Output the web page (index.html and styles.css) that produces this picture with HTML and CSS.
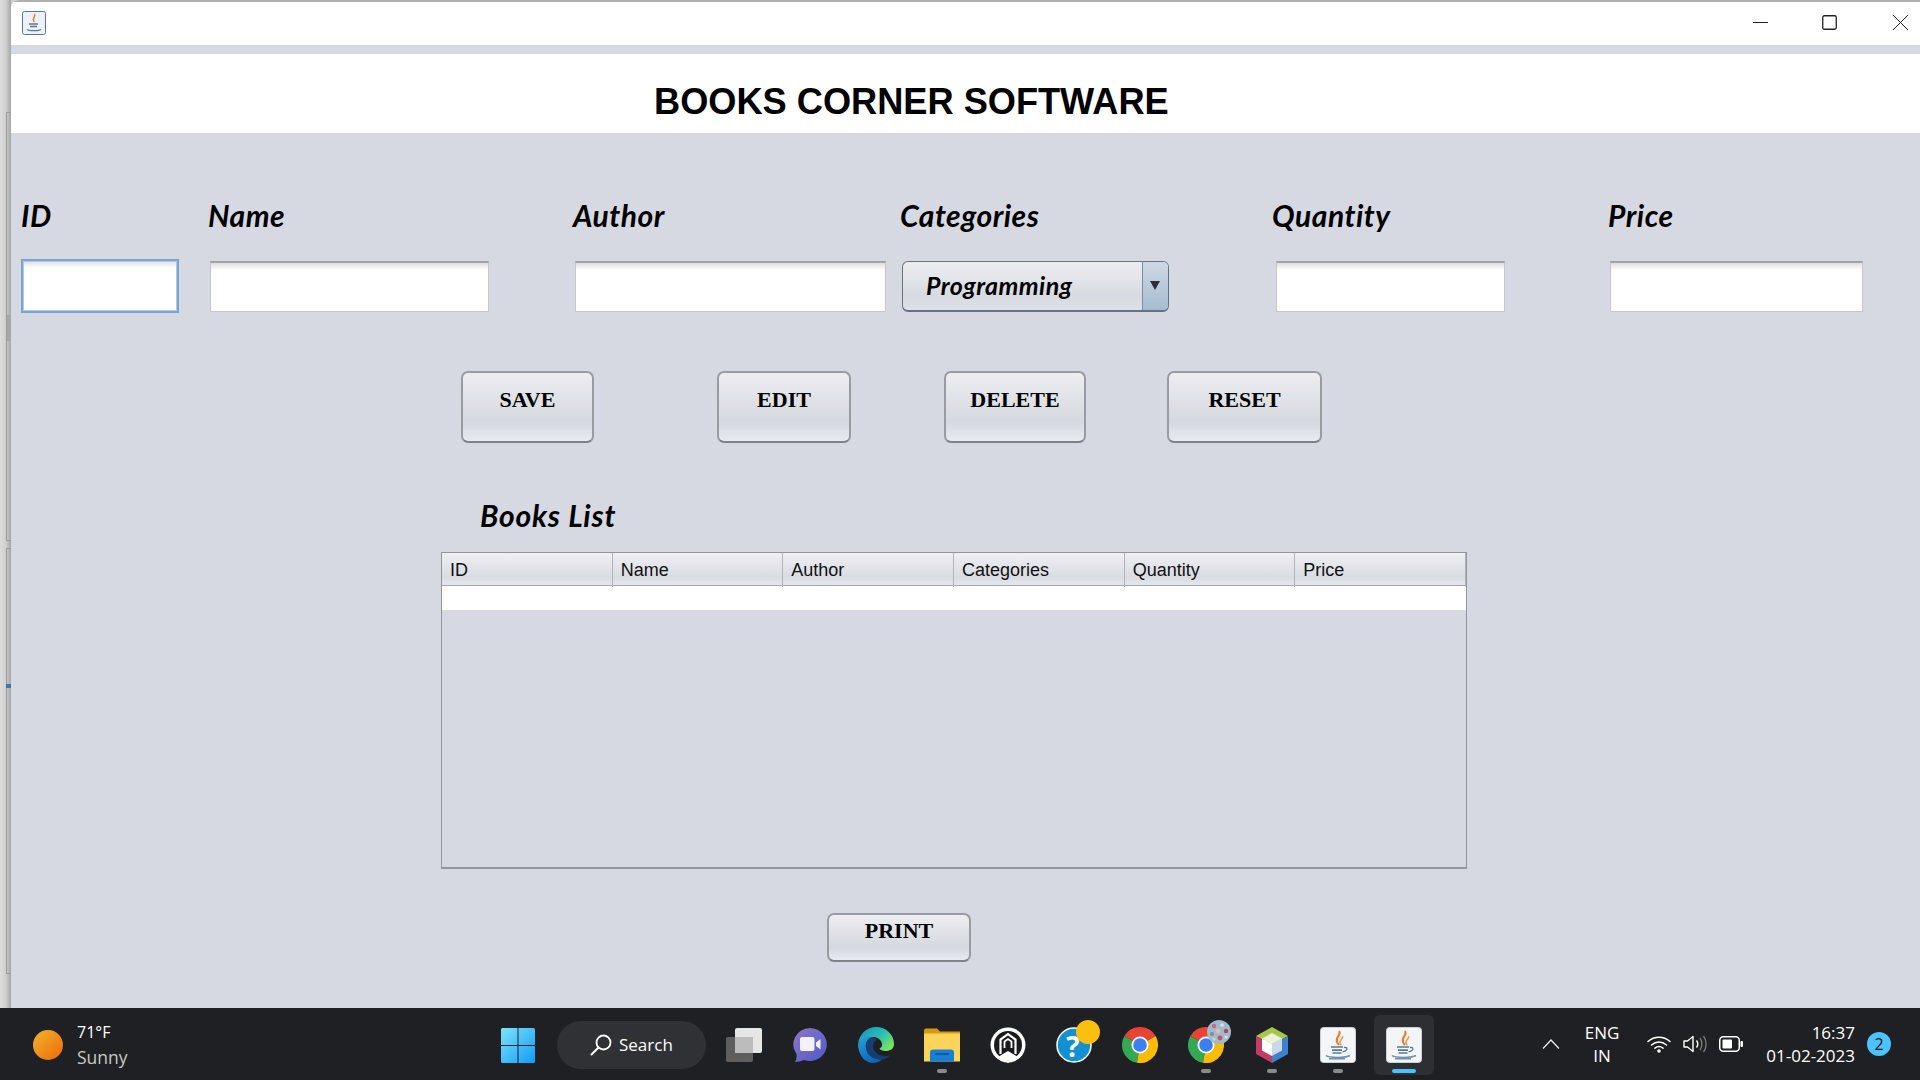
FILE: index.html
```html
<!DOCTYPE html>
<html lang="en">
<head>
    <meta charset="UTF-8">
    <meta name="viewport" content="width=device-width, initial-scale=1.0">
    <title>Books Corner Software</title>
    <link rel="stylesheet" href="styles.css">
</head>
<body>

    <svg class="defs" width="0" height="0">
        <symbol id="java" viewBox="0 0 36 36">
            <rect x="0.5" y="0.5" width="35" height="35" rx="3" fill="#f4f5f6" stroke="#c9d2da"/>
            <path d="M19 4c3 4-4 6-2 11 .5 1.3 1.200 2 2 3" fill="none" stroke="#e8792b" stroke-width="2"/>
            <path d="M22.500 9c1 3-3.500 4-2.500 7 .3 1 .8 1.500 1.300 2.200" fill="none" stroke="#ee9a55" stroke-width="1.600"/>
            <path d="M11 20h12M12 23.200h10M12.500 26h9" stroke="#55799a" stroke-width="1.700" fill="none"/>
            <path d="M24 20.500c3-.6 4 1.800 1.500 3.300l-3 1.200" stroke="#55799a" stroke-width="1.300" fill="none"/>
            <path d="M6 28.500c3 2.500 20 2.500 24 0M9 31.800h16" stroke="#6f90ad" stroke-width="1.500" fill="none"/>
        </symbol>
        <symbol id="chrome" viewBox="0 0 36 36">
            <path d="M18 18 2.400 9A18 18 0 0 1 33.600 9Z" fill="#ea4335"/>
            <path d="M18 18 2.400 9A18 18 0 0 0 15 35.800Z" fill="#34a853"/>
            <path d="M18 18 33.600 9A18 18 0 0 1 15 35.800Z" fill="#fbbc05"/>
            <circle cx="18" cy="18" r="8.500" fill="#fff"/>
            <circle cx="18" cy="18" r="6.800" fill="#3b7ff0"/>
        </symbol>
    </svg>

    <div class="desktop">
        <div class="strip">
            <div class="strip-box strip-box-top"><span class="strip-thumb"></span></div>
            <div class="strip-box strip-box-low"><span class="strip-tick"></span></div>
        </div>

        <div class="window">
            <div class="titlebar">
                <svg class="app-icon" viewBox="0 0 24 24">
                    <rect x="0.5" y="0.5" width="23" height="23" rx="2" fill="#eef2f6" stroke="#54769a"/>
                    <path d="M12.500 3c1.500 2.500-2 3.500-1 6.500l.7 1.500" fill="none" stroke="#e8792b" stroke-width="1.500"/>
                    <path d="M7 13h9M8 15.500h7M5 18.500c2 1.500 12 1.500 14 0" fill="none" stroke="#55799a" stroke-width="1.300"/>
                </svg>
                <div class="win-controls">
                    <svg class="win-min" viewBox="0 0 15 15"><path d="M0 7.500h15" stroke="#222" fill="none"/></svg>
                    <svg class="win-max" viewBox="0 0 15 15"><rect x="0.750" y="0.750" width="13.500" height="13.500" rx="1.500" stroke="#222" stroke-width="1.300" fill="none"/></svg>
                    <svg class="win-close" viewBox="0 0 15 15"><path d="M0 0l15 15M15 0 0 15" stroke="#222" fill="none"/></svg>
                </div>
            </div>

            <header class="app-header">
                <h1>BOOKS CORNER SOFTWARE</h1>
            </header>

            <main class="content">
                <div class="fields">
                    <div class="field field-id">
                        <label class="hand">ID</label>
                        <input type="text" class="input input-focus">
                    </div>
                    <div class="field field-name">
                        <label class="hand">Name</label>
                        <input type="text" class="input">
                    </div>
                    <div class="field field-author">
                        <label class="hand">Author</label>
                        <input type="text" class="input">
                    </div>
                    <div class="field field-cat">
                        <label class="hand">Categories</label>
                        <div class="combo">
                            <span class="combo-text">Programming</span>
                            <span class="combo-arrow"></span>
                        </div>
                    </div>
                    <div class="field field-qty">
                        <label class="hand">Quantity</label>
                        <input type="text" class="input">
                    </div>
                    <div class="field field-price">
                        <label class="hand">Price</label>
                        <input type="text" class="input">
                    </div>
                </div>

                <div class="actions">
                    <button class="btn btn-save">SAVE</button>
                    <button class="btn btn-edit">EDIT</button>
                    <button class="btn btn-delete">DELETE</button>
                    <button class="btn btn-reset">RESET</button>
                </div>

                <h2 class="hand list-title">Books List</h2>

                <div class="table">
                    <div class="table-head">
                        <div>ID</div>
                        <div>Name</div>
                        <div>Author</div>
                        <div>Categories</div>
                        <div>Quantity</div>
                        <div>Price</div>
                    </div>
                    <div class="table-row"></div>
                </div>

                <button class="btn btn-print">PRINT</button>
            </main>
        </div>
    </div>

    <footer class="taskbar">
        <div class="weather">
            <span class="sun"></span>
            <div class="weather-text">
                <div>71°F</div>
                <div class="weather-sub">Sunny</div>
            </div>
        </div>

        <div class="apps">
            <div class="slot">
                <svg class="start" viewBox="0 0 34 35">
                    <defs>
                        <linearGradient id="winBlue" x1="0" y1="0" x2="1" y2="1">
                            <stop offset="0" stop-color="#7ce4fb"/>
                            <stop offset="1" stop-color="#119bf7"/>
                        </linearGradient>
                    </defs>
                    <path d="M0 1.500Q0 0 1.500 0H16.500V17H0ZM17.500 0H32.500Q34 0 34 1.500V17H17.500ZM0 18H16.500V35H1.500Q0 35 0 33.500ZM17.500 18H34V33.500Q34 35 32.500 35H17.500Z" fill="url(#winBlue)"/>
                </svg>
            </div>
            <div class="search">
                <svg class="search-icon" viewBox="0 0 22 22">
                    <circle cx="13.500" cy="8.500" r="7" fill="none" stroke="#fff" stroke-width="1.800"/>
                    <path d="M8.500 13.500 1.500 20.500" stroke="#fff" stroke-width="2" stroke-linecap="round"/>
                </svg>
                <span class="search-text">Search</span>
            </div>
            <div class="slot">
                <svg class="ico-36" viewBox="0 0 36 34">
                    <rect x="9" y="0" width="27" height="25" rx="2" fill="#e6e6e6"/>
                    <rect x="0" y="9" width="27" height="25" rx="2" fill="#6a6a6a" fill-opacity="0.85"/>
                    <rect x="9" y="9" width="18" height="16" fill="#bcbcbc"/>
                </svg>
            </div>
            <div class="slot">
                <svg class="ico-36" viewBox="0 0 36 36">
                    <defs>
                        <linearGradient id="teamsBg" x1="0" y1="0" x2="1" y2="1">
                            <stop offset="0" stop-color="#8e77c8"/>
                            <stop offset="1" stop-color="#5058c4"/>
                        </linearGradient>
                    </defs>
                    <path d="M18 1a17 16.500 0 1 1-6 32c-3 1-6 2-9 2 1-2 2-5 1.500-8A17 16.500 0 0 1 18 1Z" fill="url(#teamsBg)"/>
                    <rect x="8" y="10" width="14.500" height="14" rx="2" fill="#f3f1fb"/>
                    <path d="M24 15.500 28.500 12v10.500L24 19Z" fill="#f3f1fb"/>
                </svg>
            </div>
            <div class="slot">
                <svg class="ico-36" viewBox="0 0 36 36">
                    <defs>
                        <linearGradient id="edgeTop" x1="0" y1="0" x2="1" y2="0.700">
                            <stop offset="0" stop-color="#0f8fc4"/>
                            <stop offset="0.600" stop-color="#2cc0b0"/>
                            <stop offset="1" stop-color="#7ce35c"/>
                        </linearGradient>
                        <linearGradient id="edgeLow" x1="0" y1="0" x2="0.500" y2="1">
                            <stop offset="0" stop-color="#2b9fe0"/>
                            <stop offset="1" stop-color="#0c66b5"/>
                        </linearGradient>
                    </defs>
                    <path d="M0 17C1 7 9 0 18 0c10 0 18 7.500 18 17 0 5-4 7-8.500 7-3 0-5.500-1-6-2.500 2-1 3-3 2.500-5C23 12 18.500 9.500 14 10 7 10.500 2 13 0 17Z" fill="url(#edgeTop)"/>
                    <path d="M0 17C2 12 8 9.500 14 10c-4.500 2-7 6-6 11 1 6 6 11 13 11.500 1 0 2.500 0 3.500-.5-2.500 2.500-6 4-9.500 4C7 36 0 28 0 17Z" fill="url(#edgeLow)"/>
                    <path d="M14 10c-4.500 2-7 6-6 11 1 6 6 11 13 11.500 4 .2 8-.8 12-5-2.500 1.500-5 2-8 1.500-6-1-10-5.500-10-10 0-3 1.500-5 3.500-6C17 11 15.500 10.300 14 10Z" fill="#114a8b" fill-opacity="0.750"/>
                </svg>
            </div>
            <div class="slot slot-open">
                <svg class="ico-36" viewBox="0 0 36 33">
                    <path d="M0 2Q0 0 2 0H13l3 3H36V10H0Z" fill="#d79a0e"/>
                    <path d="M0 5H36V33H0Z" fill="#fcd45a"/>
                    <path d="M6 33V24q0-3 3-3H27q3 0 3 3V33Z" fill="#1580d6"/>
                    <path d="M11 25.500H25" stroke="#0d4f8e" stroke-width="1.500"/>
                </svg>
            </div>
            <div class="slot">
                <svg class="ico-36" viewBox="0 0 36 36">
                    <circle cx="18" cy="18" r="17.500" fill="#fff"/>
                    <circle cx="18" cy="18" r="14" fill="#1a1a1c"/>
                    <path d="M10.500 27V12.500L18 7l7.500 5.500V27" fill="none" stroke="#fff" stroke-width="2.200"/>
                    <path d="M14.500 21V14.500L18 12l3.500 2.500V21" fill="none" stroke="#fff" stroke-width="1.800"/>
                    <path d="M7 30.500 18 24l11 6.500L18 36Z" fill="#fff"/>
                </svg>
            </div>
            <div class="slot">
                <svg class="ico-36" viewBox="0 0 36 36">
                    <circle cx="18" cy="18" r="17" fill="#1390d2" stroke="#fff" stroke-width="1.500"/>
                </svg>
                <span class="help-mark">?</span>
                <span class="badge-yellow"></span>
            </div>
            <div class="slot">
                <svg class="ico-36"><use href="#chrome"/></svg>
            </div>
            <div class="slot slot-open">
                <svg class="ico-36"><use href="#chrome"/></svg>
                <svg class="badge-photo" viewBox="0 0 24 24">
                    <circle cx="12" cy="12" r="12" fill="#9fb9cf"/>
                    <circle cx="7" cy="6" r="2.200" fill="#c96a70"/>
                    <circle cx="15" cy="5" r="1.800" fill="#e8dcd6"/>
                    <circle cx="19" cy="11" r="2.200" fill="#b7484f"/>
                    <circle cx="11" cy="11" r="2.400" fill="#e2b9b4"/>
                    <circle cx="5" cy="14" r="2" fill="#7d8f8a"/>
                    <circle cx="13" cy="18" r="2.400" fill="#c4585e"/>
                    <circle cx="19" cy="17" r="1.600" fill="#dfe5e6"/>
                    <circle cx="7" cy="19" r="1.800" fill="#dcc8bf"/>
                </svg>
            </div>
            <div class="slot slot-open">
                <svg class="ico-32" viewBox="0 0 32 36">
                    <path d="M16 0 32 9 16 18 0 9Z" fill="#a9c64a"/>
                    <path d="M32 9V27L16 36V18Z" fill="#3d82cf"/>
                    <path d="M0 9V27L16 36V18Z" fill="#c23c66"/>
                    <path d="M16 6 26 11.500 16 17 6 11.500Z" fill="#eef2da"/>
                    <path d="M26 11.500V23.500L16 29V17Z" fill="#c9d9ea"/>
                    <path d="M6 11.500V23.500L16 29V17Z" fill="#fff"/>
                </svg>
            </div>
            <div class="slot slot-open">
                <svg class="ico-36"><use href="#java"/></svg>
            </div>
            <div class="slot slot-active">
                <svg class="ico-36"><use href="#java"/></svg>
            </div>
        </div>

        <div class="tray">
            <svg class="caret" viewBox="0 0 18 10"><path d="M1 9.500 9 1l8 8.500" fill="none" stroke="#f2f2f2" stroke-width="1.200"/></svg>
            <div class="lang">
                <div>ENG</div>
                <div>IN</div>
            </div>
            <svg class="wifi" viewBox="0 0 24 18">
                <path d="M1 6.500C7.500.8 16.500.8 23 6.500M4.500 10c4.500-4 10.500-4 15 0M8 13.200c2.500-2 5.500-2 8 0" fill="none" stroke="#fff" stroke-width="1.500" stroke-linecap="round"/>
                <circle cx="12" cy="16" r="1.800" fill="#fff"/>
            </svg>
            <svg class="volume" viewBox="0 0 24 18">
                <path d="M1 6h3.500L10 1.500v15L4.500 12H1Z" fill="none" stroke="#fff" stroke-width="1.400" stroke-linejoin="round"/>
                <path d="M13.500 5.500c1.500 2 1.500 5 0 7" fill="none" stroke="#fff" stroke-width="1.400"/>
                <path d="M17 3c2.500 3.500 2.500 8.500 0 12M20.500 1c3.500 4.500 3.500 11.500 0 16" fill="none" stroke="#77787a" stroke-width="1.400"/>
            </svg>
            <svg class="battery" viewBox="0 0 24 16">
                <rect x="0.750" y="0.750" width="19.500" height="14.500" rx="3.500" fill="none" stroke="#fff" stroke-width="1.500"/>
                <rect x="3.500" y="3.500" width="9.500" height="9" rx="1" fill="#fff"/>
                <rect x="21.500" y="5" width="2.500" height="6" rx="1" fill="#fff"/>
            </svg>
            <div class="clock">
                <div>16:37</div>
                <div>01-02-2023</div>
            </div>
            <span class="notif">2</span>
        </div>
    </footer>

</body>
</html>
```

FILE: styles.css
```css
body {
    margin: 0;
    width: 1920px;
    height: 1080px;
    overflow: hidden;
    background-color: #d0d0d0;
    font-family: "Liberation Sans", Arial, sans-serif;
}
.defs {
    position: absolute;
}
.desktop {
    display: flex;
    height: 1008px;
}

/* bit of the window behind, at the left edge */
.strip {
    width: 11px;
    flex-shrink: 0;
    display: flex;
    flex-direction: column;
    gap: 7px;
    padding-top: 112px;
    box-sizing: border-box;
    background: linear-gradient(to right, #dcdcdc, #cfcfcf 55%, #a9a9a9 95%);
}
.strip-box {
    margin-left: 6px;
    border: 1px solid #9b9b9b;
    border-right: none;
    position: relative;
}
.strip-box-top {
    height: 427px;
}
.strip-box-low {
    height: 424px;
}
.strip-thumb {
    position: absolute;
    left: 0;
    right: 0;
    top: 202px;
    height: 26px;
    background-color: #a8a8a8;
}
.strip-tick {
    position: absolute;
    left: -1px;
    right: 0;
    top: 135px;
    height: 4px;
    background-color: #3f76ad;
}

.window {
    flex: 1;
    display: flex;
    flex-direction: column;
    background-color: #d6d9e1;
    border-top-left-radius: 8px;
    overflow: hidden;
}
.titlebar {
    height: 43px;
    border-top: 2px solid #b0b0b0;
    background-color: #fff;
    display: flex;
    align-items: center;
    padding-left: 11px;
    flex-shrink: 0;
}
.app-icon {
    width: 24px;
    height: 24px;
    margin-bottom: 2px;
}
.win-controls {
    margin-left: auto;
    margin-right: 12px;
    margin-bottom: 2px;
    display: flex;
    align-items: center;
}
.win-controls svg {
    width: 15px;
    height: 15px;
}
.win-max {
    margin-left: 54px;
}
.win-close {
    margin-left: 56px;
}

.app-header {
    margin-top: 9px;
    height: 79px;
    background-color: #fff;
    flex-shrink: 0;
}
.app-header h1 {
    margin: 0;
    padding: 25px 0 0 643px;
    font-size: 36.2px;
    line-height: 46px;
    font-weight: bold;
    color: #000;
}

.content {
    flex: 1;
    display: flex;
    flex-direction: column;
    align-items: flex-start;
}
.hand {
    font-family: "Lato", "Noto Sans", sans-serif;
    font-style: italic;
    font-weight: 700;
    letter-spacing: 0.5px;
    color: #000;
}

.fields {
    display: flex;
    margin-top: 60px;
    height: 120px;
}
.field {
    display: flex;
    flex-direction: column;
}
.field label {
    display: block;
    height: 68px;
    padding-top: 2px;
    box-sizing: border-box;
    line-height: 40px;
    font-size: 30px;
    margin-left: -2px;
    white-space: nowrap;
}
.field-id {
    width: 158px;
    margin-left: 10px;
}
.field-id label {
    margin-left: 0;
}
.field-name {
    width: 279px;
    margin-left: 31px;
}
.field-author {
    width: 311px;
    margin-left: 86px;
}
.field-cat {
    width: 267px;
    margin-left: 16px;
}
.field-qty {
    width: 229px;
    margin-left: 107px;
}
.field-qty label {
    margin-left: -4px;
}
.field-price {
    width: 253px;
    margin-left: 105px;
}
.input {
    box-sizing: border-box;
    width: 100%;
    height: 51px;
    padding: 0;
    border: 1px solid #c4c6cb;
    border-top: 2px solid #a2a3a6;
    background: linear-gradient(to bottom, #dddee1, #fff 7px);
    outline: none;
}
.input-focus {
    height: 54px;
    margin-top: -1px;
    border: 2px solid #79a5d2;
    box-shadow: inset 0 0 0 1px #b7cbe0;
}
.combo {
    box-sizing: border-box;
    height: 51px;
    display: flex;
    align-items: center;
    border: 1px solid #68727f;
    border-bottom-width: 2px;
    border-radius: 6px;
    overflow: hidden;
    background: linear-gradient(to bottom, #eceef1, #d7dae0 70%, #dde0e6);
}
.combo-text {
    flex: 1;
    padding: 0 0 2px 23px;
    font-family: "Lato", "Noto Sans", sans-serif;
    font-style: italic;
    font-weight: 700;
    font-size: 25px;
    letter-spacing: 0.45px;
    color: #000;
}
.combo-arrow {
    width: 25px;
    height: 100%;
    position: relative;
    border-left: 1px solid #7d8ea3;
    background: linear-gradient(to bottom, #cdd8e4, #a5bcd3);
}
.combo-arrow::after {
    content: "";
    position: absolute;
    left: 7px;
    top: 19px;
    border-left: 5px solid transparent;
    border-right: 5px solid transparent;
    border-top: 9px solid #2c3034;
}

.btn {
    box-sizing: border-box;
    display: flex;
    justify-content: center;
    padding: 0;
    border: 2px solid #989ba1;
    border-bottom-color: #7f8288;
    border-radius: 7px;
    background: linear-gradient(to bottom, #eceef1, #d5d8de 72%, #e8ebf2);
    font-family: "Liberation Serif", "Times New Roman", serif;
    font-weight: bold;
    font-size: 22px;
    color: #000;
}
.actions {
    display: flex;
    margin-top: 58px;
    margin-left: 450px;
}
.actions .btn {
    height: 72px;
    padding-top: 15px;
    line-height: 24px;
}
.btn-save {
    width: 133px;
}
.btn-edit {
    width: 134px;
    margin-left: 123px;
}
.btn-delete {
    width: 142px;
    margin-left: 93px;
}
.btn-reset {
    width: 155px;
    margin-left: 81px;
}

.list-title {
    margin: 52px 0 0 469px;
    font-size: 30px;
    letter-spacing: 0.8px;
    line-height: 40px;
    height: 57px;
}

.table {
    box-sizing: border-box;
    width: 1026px;
    height: 317px;
    margin-left: 430px;
    border: 1px solid #92959c;
    border-bottom-width: 2px;
}
.table-head {
    display: grid;
    grid-template-columns: repeat(6, 1fr);
    height: 32px;
    border-bottom: 1px solid #a3a6ad;
    background: linear-gradient(to bottom, #eef0f3, #d9dce2 75%, #e3e6ec);
}
.table-head div {
    padding-left: 8px;
    line-height: 34px;
    font-size: 18px;
    color: #111;
    border-right: 1px solid #b0b3ba;
}
.table-row {
    height: 24px;
    background-color: #fff;
}

.btn-print {
    width: 144px;
    height: 49px;
    margin: 44px 0 0 816px;
    padding-top: 3px;
    font-size: 22px;
    line-height: 26px;
}

/* windows taskbar */
.taskbar {
    height: 72px;
    box-sizing: border-box;
    padding-top: 2px;
    display: flex;
    align-items: center;
    background-color: #1f2023;
    color: #fff;
    font-family: "Open Sans", "Noto Sans", sans-serif;
}
.weather {
    width: 485px;
    flex-shrink: 0;
    display: flex;
    align-items: center;
    box-sizing: border-box;
    padding-left: 33px;
}
.sun {
    width: 30px;
    height: 30px;
    border-radius: 50%;
    background: linear-gradient(135deg, #f0b429, #ee6a0c);
}
.weather-text {
    margin-left: 14px;
    font-size: 16px;
    line-height: 25px;
}
.weather-sub {
    color: #c9c9c9;
    font-size: 17.5px;
}
.apps {
    display: flex;
    align-items: center;
}
.slot {
    width: 66px;
    height: 60px;
    position: relative;
    display: flex;
    align-items: center;
    justify-content: center;
    flex-shrink: 0;
}
.slot-open::after,
.slot-active::after {
    content: "";
    position: absolute;
    bottom: 2px;
    left: 28px;
    width: 10px;
    height: 4px;
    border-radius: 2px;
    background-color: #8b8b8b;
}
.slot-active {
    background-color: #2e2f32;
    border-radius: 6px;
    width: 60px;
    margin-left: 3px;
}
.slot-active::after {
    left: 18px;
    width: 24px;
    background-color: #4cc2ff;
}
.start {
    width: 34px;
    height: 35px;
}
.ico-36 {
    width: 36px;
    height: 36px;
}
.ico-32 {
    width: 32px;
    height: 36px;
}
.search {
    width: 149px;
    height: 48px;
    margin: 0 5px 0 6px;
    border-radius: 24px;
    background-color: #303134;
    display: flex;
    align-items: center;
    box-sizing: border-box;
    padding-left: 33px;
    font-size: 17px;
    flex-shrink: 0;
}
.search-icon {
    width: 22px;
    height: 22px;
    margin-right: 7px;
}
.search-text {
    padding-bottom: 2px;
}
.help-mark {
    position: absolute;
    left: 21px;
    top: 12px;
    width: 22px;
    text-align: center;
    font-family: "Open Sans", sans-serif;
    font-weight: bold;
    font-size: 28px;
    line-height: 38px;
    color: #fff;
}
.badge-yellow {
    position: absolute;
    left: 35px;
    top: 5px;
    width: 24px;
    height: 24px;
    border-radius: 50%;
    background-color: #fdbf0d;
}
.badge-photo {
    position: absolute;
    left: 34px;
    top: 5px;
    width: 24px;
    height: 24px;
}

.tray {
    margin-left: auto;
    margin-bottom: 2px;
    display: flex;
    align-items: center;
    padding-right: 29px;
    font-size: 17px;
    line-height: 23px;
}
.caret {
    width: 18px;
    height: 10px;
}
.lang {
    width: 44px;
    margin-left: 20px;
    text-align: center;
}
.wifi {
    width: 24px;
    height: 18px;
    margin-left: 23px;
}
.volume {
    width: 24px;
    height: 18px;
    margin-left: 12px;
}
.battery {
    width: 24px;
    height: 16px;
    margin-left: 12px;
}
.clock {
    margin-left: 23px;
    text-align: right;
    width: 89px;
    white-space: nowrap;
}
.notif {
    width: 24px;
    height: 24px;
    margin-left: 12px;
    border-radius: 50%;
    background-color: #4cc2ff;
    color: #111;
    text-align: center;
    font-size: 16px;
    line-height: 24px;
}
```
